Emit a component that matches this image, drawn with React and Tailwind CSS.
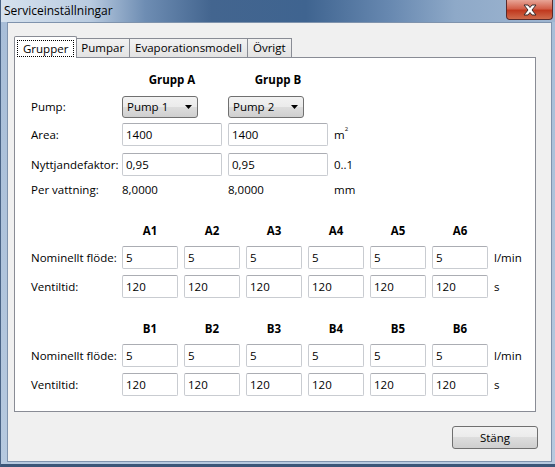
import React, { useState } from 'react';

const font = { fontFamily: '"Open Sans", "Noto Sans", sans-serif' };

const Input = ({ value, w = 'w-[100px]' }) => (
  <div className={`${w} h-[23px] border border-[#c9ccd1] border-t-[#abadb3] rounded-[2px] bg-white pl-[3px] flex items-center text-[11.5px] text-black`}>
    {value}
  </div>
);

const Combo = ({ value }) => (
  <div className="w-[76px] h-[22px] border border-[#707070] rounded-[3px] bg-[linear-gradient(#f2f2f2_0%,#ebebeb_50%,#dddddd_50%,#cfcfcf_100%)] flex items-center pl-[4px] pr-[5px] text-[11.5px] text-black">
    <span className="flex-1">{value}</span>
    <svg width="7" height="4" viewBox="0 0 7 4"><path d="M0 0h7L3.5 4z" fill="#000" /></svg>
  </div>
);

const Tab = ({ label, active, onClick }) =>
  active ? (
    <div className="relative z-10 -mb-px h-[22px] px-[2px] pt-[3px] bg-white border border-b-0 border-[#898c95] rounded-t-[2px] -mr-[1px]">
      <div className="h-[17px] px-[5px] border border-dotted border-black flex items-center text-[11.5px] text-black">
        {label}
      </div>
    </div>
  ) : (
    <div
      onClick={onClick}
      className="h-[19px] px-[5px] border border-b-0 border-[#898c95] -ml-[1px] bg-[linear-gradient(#f2f2f2,#e3e3e3)] flex items-center text-[11.5px] text-black cursor-default"
    >
      {label}
    </div>
  );

const ValveBlock = ({ prefix, flow, time }) => {
  const ids = [1, 2, 3, 4, 5, 6];
  return (
    <div className="flex flex-col">
      <div className="flex h-[16px] items-center">
        <div className="w-[91px]" />
        <div className="flex gap-[6px]">
          {ids.map((n) => (
            <div key={n} className="w-[56px] text-center font-bold text-[11.5px] text-black">
              {prefix}{n}
            </div>
          ))}
        </div>
      </div>
      <div className="flex items-center mt-[7px]">
        <div className="w-[91px] text-[11.5px] text-black">Nominellt flöde:</div>
        <div className="flex gap-[6px]">
          {ids.map((n) => <Input key={n} value={flow} w="w-[56px]" />)}
        </div>
        <div className="ml-[6px] text-[11.5px] text-black">l/min</div>
      </div>
      <div className="flex items-center mt-[6px]">
        <div className="w-[91px] text-[11.5px] text-black">Ventiltid:</div>
        <div className="flex gap-[6px]">
          {ids.map((n) => <Input key={n} value={time} w="w-[56px]" />)}
        </div>
        <div className="ml-[6px] text-[11.5px] text-black">s</div>
      </div>
    </div>
  );
};

export default function App() {
  const [tab, setTab] = useState('Grupper');
  const tabs = ['Grupper', 'Pumpar', 'Evaporationsmodell', 'Övrigt'];

  return (
    <div
      style={font}
      className="w-[555px] h-[467px] flex flex-col bg-[#a9bdd5] border-b-[3px] border-b-[#3b5678] border-l border-l-[#4a6486]"
    >
      {/* title bar */}
      <div className="h-[22px] flex items-start bg-[linear-gradient(90deg,#d6e2ee_0%,#b9cbe0_16%,#6e8db3_26%,#43658f_38%,#3f6490_55%,#6788b0_70%,#8ea9c8_82%,#9fb6d1_100%)]">
        <div className="pl-[3px] pt-[2px] text-[12px] text-black">Serviceinställningar</div>
        <div className="ml-auto mr-[2px] w-[47px] h-[20px] rounded-b-[4px] border border-t-0 border-[#5a2a2a] bg-[linear-gradient(#e8a597_0%,#d3604a_45%,#c0391f_55%,#cf6b4c_100%)] flex items-center justify-center">
          <svg width="14" height="12" viewBox="0 0 14 12">
            <path d="M1 1h4l2 2.5L9 1h4L9 6l4 5H9L7 8.5 5 11H1l4-5z" fill="#fff" stroke="#3a2a2a" strokeWidth="1" strokeLinejoin="round" />
          </svg>
        </div>
      </div>

      {/* frame + client */}
      <div className="flex-1 flex pl-[6px] pr-[3px] pb-[2px] bg-[linear-gradient(#a8bed8,#b6c9df)]">
        <div className="flex-1 border border-[#7f93ad] bg-[#f0f0f0] flex flex-col pl-[6px] pt-[13px]">
          {/* tabs */}
          <div className="flex items-end">
            {tabs.map((t) => (
              <Tab key={t} label={t} active={tab === t} onClick={() => setTab(t)} />
            ))}
          </div>

          {/* panel */}
          <div className="w-[522px] h-[355px] border border-[#898c95] bg-white pl-[16px] pt-[14px]">
            <div className="flex flex-col">
              <div className="flex h-[16px] items-center">
                <div className="w-[91px]" />
                <div className="w-[100px] text-center font-bold text-[11.5px] text-black">Grupp A</div>
                <div className="w-[100px] ml-[6px] text-center font-bold text-[11.5px] text-black">Grupp B</div>
              </div>
              <div className="flex items-center mt-[8px]">
                <div className="w-[91px] text-[11.5px] text-black">Pump:</div>
                <div className="w-[100px]"><Combo value="Pump 1" /></div>
                <div className="w-[100px] ml-[6px]"><Combo value="Pump 2" /></div>
              </div>
              <div className="flex items-center mt-[5px]">
                <div className="w-[91px] text-[11.5px] text-black">Area:</div>
                <Input value="1400" />
                <div className="ml-[6px]"><Input value="1400" /></div>
                <div className="ml-[6px] text-[11.5px] text-black">
                  m<sup className="text-[6px] align-[5px]">2</sup>
                </div>
              </div>
              <div className="flex items-center mt-[7px]">
                <div className="w-[91px] text-[11.5px] text-black">Nyttjandefaktor:</div>
                <Input value="0,95" />
                <div className="ml-[6px]"><Input value="0,95" /></div>
                <div className="ml-[6px] text-[11.5px] text-black">0..1</div>
              </div>
              <div className="flex items-center h-[18px] mt-[5px] text-[11.5px] text-black">
                <div className="w-[91px]">Per vattning:</div>
                <div className="w-[100px]">8,0000</div>
                <div className="w-[100px] ml-[6px]">8,0000</div>
                <div className="ml-[6px]">mm</div>
              </div>

              <div className="mt-[24px]">
                <ValveBlock prefix="A" flow="5" time="120" />
              </div>
              <div className="mt-[23px]">
                <ValveBlock prefix="B" flow="5" time="120" />
              </div>
            </div>
          </div>

          {/* button row */}
          <div className="w-[524px] flex justify-end mt-[14px]">
            <button className="w-[86px] h-[23px] border border-[#707070] rounded-[3px] bg-[linear-gradient(#f2f2f2_0%,#ebebeb_50%,#dddddd_50%,#cfcfcf_100%)] text-[11.5px] text-black">
              Stäng
            </button>
          </div>
        </div>
      </div>
    </div>
  );
}
